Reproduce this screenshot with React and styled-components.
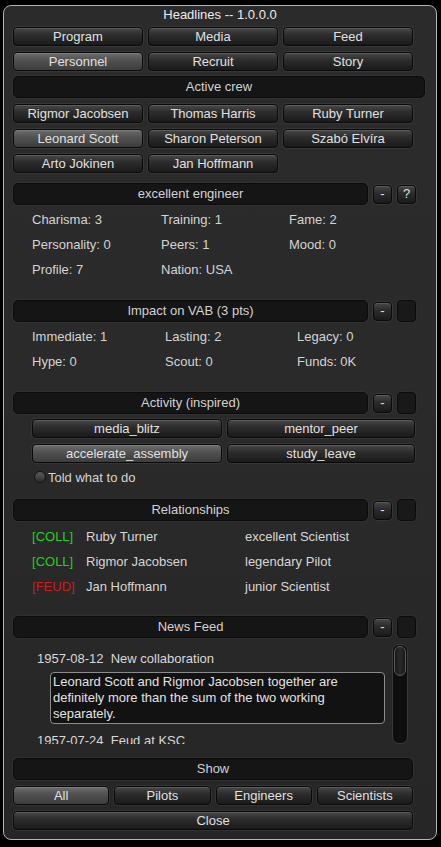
import React from 'react';
import styled, { createGlobalStyle } from 'styled-components';

const GlobalStyle = createGlobalStyle`
    body {
        margin: 0;
        background: #000;
        font-family: "Liberation Sans", Arial, sans-serif;
    }
`;

const Window = styled.div`
    box-sizing: border-box;
    width: 434px;
    height: 835px;
    margin: 5px 0 0 3px;
    border: 1px solid #b4b4b4;
    border-radius: 8px;
    background: linear-gradient(#2b2b2b, #2a2a2a 50%, #262626);
    padding: 0 0 0 9px;
    color: #d6d6d6;
    font-size: 13px;
    display: flex;
    flex-direction: column;
    overflow: hidden;
`;

const Title = styled.div`
    height: 20px;
    line-height: 17px;
    text-align: center;
    color: #ececec;
    margin-left: -9px;
`;

const Row = styled.div`
    display: flex;
    align-items: center;
    margin-top: ${({ $mt }) => $mt || 0}px;
`;

const ButtonGrid = styled.div`
    display: grid;
    grid-template-columns: ${({ $cols }) => $cols || 'repeat(3, 1fr)'};
    column-gap: 5px;
    row-gap: 6px;
    width: ${({ $w }) => $w || 400}px;
    margin-top: ${({ $mt }) => $mt || 0}px;
    margin-left: ${({ $ml }) => $ml || 0}px;
`;

const Button = styled.button`
    box-sizing: border-box;
    height: 19px;
    padding: 0;
    border: 1px solid #0a0a0a;
    border-radius: 4px;
    background: ${({ $on }) =>
        $on
            ? 'linear-gradient(#6e6e6e, #525252 40%, #3d3d3d)'
            : 'linear-gradient(#484848, #2d2d2d 40%, #1a1a1a)'};
    box-shadow: inset 0 1px 0 rgba(255, 255, 255, 0.12), 0 0 0 1px rgba(90, 90, 90, 0.25);
    color: #e0e0e0;
    font-family: inherit;
    font-size: 13px;
    line-height: 16px;
    white-space: nowrap;
`;

const Bar = styled.div`
    box-sizing: border-box;
    height: 22px;
    width: ${({ $w }) => $w || 355}px;
    border: 1px solid #0b0b0b;
    border-radius: 5px;
    background: #151515;
    box-shadow: 0 0 0 1px rgba(70, 70, 70, 0.25);
    text-align: center;
    line-height: 20px;
    color: #d2d2d2;
    margin-top: ${({ $mt }) => $mt || 0}px;
`;

const SmallButton = styled(Button)`
    width: 19px;
    margin-left: 5px;
`;

const EmptyBox = styled.div`
    box-sizing: border-box;
    width: 19px;
    height: 22px;
    margin-left: 5px;
    border: 1px solid #0b0b0b;
    border-radius: 4px;
    background: #191919;
    box-shadow: 0 0 0 1px rgba(70, 70, 70, 0.2);
`;

const StatGrid = styled.div`
    display: grid;
    grid-template-columns: ${({ $cols }) => $cols};
    grid-auto-rows: 25px;
    align-items: center;
    padding: 2px 0 0 19px;
    margin-bottom: 18px;
`;

const Stat = styled.span`
    color: #d4d4d4;
`;

const Toggle = styled.div`
    display: flex;
    align-items: center;
    margin: 7px 0 0 21px;
    height: 14px;
    color: #d4d4d4;
`;

const ToggleDot = styled.span`
    box-sizing: border-box;
    width: 12px;
    height: 12px;
    border-radius: 50%;
    border: 1px solid #111;
    background: linear-gradient(#5a5a5a, #2e2e2e);
    margin-right: 2px;
`;

const RelList = styled.div`
    padding: 3px 0 0 19px;
    margin-bottom: 17px;
`;

const RelRow = styled.div`
    display: grid;
    grid-template-columns: 54px 159px 1fr;
    height: 25px;
    align-items: center;
`;

const Tag = styled.span`
    color: ${({ $kind }) => ($kind === 'FEUD' ? '#d21a1a' : '#21cf21')};
`;

const Feed = styled.div`
    position: relative;
    width: 400px;
    height: 100px;
    margin-top: 6px;
    overflow: hidden;
`;

const FeedList = styled.div`
    padding-top: 7px;
`;

const FeedDate = styled.div`
    padding-left: 24px;
    height: 16px;
    line-height: 16px;
    white-space: pre;
    color: #d8d8d8;
`;

const FeedText = styled.div`
    box-sizing: border-box;
    width: 335px;
    margin: 5px 0 9px 37px;
    padding: 1px 2px;
    border: 1px solid #8c8c8c;
    border-radius: 4px;
    background: #121212;
    line-height: 16px;
    color: #e2e2e2;
`;

const Scrollbar = styled.div`
    position: absolute;
    top: 0;
    left: 379px;
    width: 14px;
    height: 98px;
    border: 1px solid #3a3a3a;
    border-radius: 7px;
    background: #0e0e0e;
`;

const Thumb = styled.div`
    box-sizing: border-box;
    margin: 1px;
    height: 30px;
    border: 1px solid #5a5a5a;
    border-radius: 6px;
    background: linear-gradient(90deg, #1a1a1a, #2a2a2a, #1a1a1a);
`;

const teams = ['Program', 'Media', 'Feed', 'Personnel', 'Recruit', 'Story'];
const crew = [
    'Rigmor Jacobsen', 'Thomas Harris', 'Ruby Turner',
    'Leonard Scott', 'Sharon Peterson', 'Szabó Elvíra',
    'Arto Jokinen', 'Jan Hoffmann',
];
const relations = [
    ['COLL', 'Ruby Turner', 'excellent Scientist'],
    ['COLL', 'Rigmor Jacobsen', 'legendary Pilot'],
    ['FEUD', 'Jan Hoffmann', 'junior Scientist'],
];

const App = () => {
    return (
        <>
            <GlobalStyle />
            <Window>
                <Title>Headlines -- 1.0.0.0</Title>

                <ButtonGrid $mt={1}>
                    {teams.map((t) => (
                        <Button key={t} $on={t === 'Personnel'}>{t}</Button>
                    ))}
                </ButtonGrid>

                <Bar $w={412} $mt={5}>Active crew</Bar>

                <ButtonGrid $mt={6}>
                    {crew.map((c) => (
                        <Button key={c} $on={c === 'Leonard Scott'}>{c}</Button>
                    ))}
                </ButtonGrid>

                <Row $mt={10}>
                    <Bar>excellent engineer</Bar>
                    <SmallButton>-</SmallButton>
                    <SmallButton>?</SmallButton>
                </Row>
                <StatGrid $cols="129px 128px 1fr">
                    <Stat>Charisma: 3</Stat><Stat>Training: 1</Stat><Stat>Fame: 2</Stat>
                    <Stat>Personality: 0</Stat><Stat>Peers: 1</Stat><Stat>Mood: 0</Stat>
                    <Stat>Profile: 7</Stat><Stat>Nation: USA</Stat>
                </StatGrid>

                <Row>
                    <Bar>Impact on VAB (3 pts)</Bar>
                    <SmallButton>-</SmallButton>
                    <EmptyBox />
                </Row>
                <StatGrid $cols="133px 132px 1fr">
                    <Stat>Immediate: 1</Stat><Stat>Lasting: 2</Stat><Stat>Legacy: 0</Stat>
                    <Stat>Hype: 0</Stat><Stat>Scout: 0</Stat><Stat>Funds: 0K</Stat>
                </StatGrid>

                <Row>
                    <Bar>Activity (inspired)</Bar>
                    <SmallButton>-</SmallButton>
                    <EmptyBox />
                </Row>
                <ButtonGrid $cols="190px 188px" $w={383} $ml={19} $mt={5}>
                    <Button>media_blitz</Button>
                    <Button>mentor_peer</Button>
                    <Button $on>accelerate_assembly</Button>
                    <Button>study_leave</Button>
                </ButtonGrid>
                <Toggle>
                    <ToggleDot />
                    Told what to do
                </Toggle>

                <Row $mt={15}>
                    <Bar>Relationships</Bar>
                    <SmallButton>-</SmallButton>
                    <EmptyBox />
                </Row>
                <RelList>
                    {relations.map(([kind, name, role]) => (
                        <RelRow key={name}>
                            <Tag $kind={kind}>[{kind}]</Tag>
                            <span>{name}</span>
                            <span>{role}</span>
                        </RelRow>
                    ))}
                </RelList>

                <Row>
                    <Bar>News Feed</Bar>
                    <SmallButton>-</SmallButton>
                    <EmptyBox />
                </Row>
                <Feed>
                    <FeedList>
                        <FeedDate>{'1957-08-12  New collaboration'}</FeedDate>
                        <FeedText>
                            Leonard Scott and Rigmor Jacobsen together are definitely more than the sum of the two working separately.
                        </FeedText>
                        <FeedDate>{'1957-07-24  Feud at KSC'}</FeedDate>
                    </FeedList>
                    <Scrollbar>
                        <Thumb />
                    </Scrollbar>
                </Feed>

                <Bar $w={400} $mt={14}>Show</Bar>
                <ButtonGrid $cols="repeat(4, 1fr)" $mt={6}>
                    <Button $on>All</Button>
                    <Button>Pilots</Button>
                    <Button>Engineers</Button>
                    <Button>Scientists</Button>
                </ButtonGrid>
                <ButtonGrid $cols="1fr" $mt={6}>
                    <Button>Close</Button>
                </ButtonGrid>
            </Window>
        </>
    );
};

export default App;
